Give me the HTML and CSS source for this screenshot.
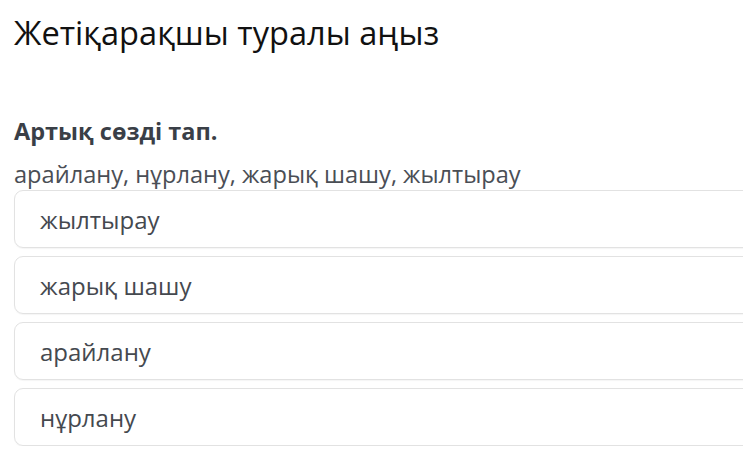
FILE: index.html
```html
<!DOCTYPE html>
<html lang="kk">
<head>
<meta charset="utf-8">
<link rel="stylesheet" href="styles.css">
</head>
<body>
<main class="page">
  <h1 class="title">Жетіқарақшы туралы аңыз</h1>
  <h2 class="task">Артық сөзді тап.</h2>
  <p class="question">арайлану, нұрлану, жарық шашу, жылтырау</p>
  <div class="options">
    <div class="option">жылтырау</div>
    <div class="option">жарық шашу</div>
    <div class="option">арайлану</div>
    <div class="option">нұрлану</div>
  </div>
</main>
</body>
</html>
```
FILE: styles.css
```css
html, body {
  margin: 0;
  padding: 0;
  background: #ffffff;
}
body {
  font-family: "Open Sans", "Noto Sans", sans-serif;
  overflow: hidden;
}
.page {
  padding-left: 14px;
  width: 760px;
}
.title {
  margin: 13px 0 0 0;
  font-size: 32.6px;
  line-height: 40px;
  font-weight: 400;
  color: #111111;
}
.task {
  margin: 64px 0 0 0;
  font-size: 23.5px;
  line-height: 28px;
  font-weight: 700;
  color: #3a3f47;
}
.question {
  margin: 14px 0 0 0;
  font-size: 23.6px;
  line-height: 30px;
  color: #4a4e55;
}
.options {
  display: flex;
  flex-direction: column;
  gap: 8px;
  margin-top: 1px;
}
.option {
  height: 56px;
  border: 1px solid #e2e2e2;
  border-radius: 9px;
  box-shadow: 0 1px 1px rgba(0,0,0,0.04);
  display: flex;
  align-items: center;
  padding-left: 25px;
  font-size: 24px;
  color: #45494f;
}
```
